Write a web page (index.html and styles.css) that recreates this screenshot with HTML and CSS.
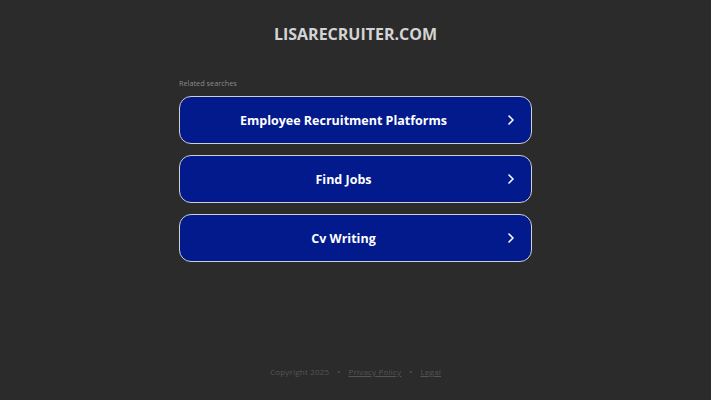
FILE: index.html
```html
<!DOCTYPE html>
<html>
<head>
<meta charset="utf-8">
<link rel="stylesheet" href="styles.css">
</head>
<body>
<div class="page">
  <header class="header">
    <h1 class="domain">LISARECRUITER.COM</h1>
  </header>
  <main class="main">
    <div class="related">
      <div class="related-title">Related searches</div>
      <a class="btn" href="#"><span class="btn-text">Employee Recruitment Platforms</span><svg class="chev" viewBox="0 0 6 10" width="6" height="10"><path d="M1 1 L5 5 L1 9" fill="none" stroke="#fff" stroke-width="1.6" stroke-linecap="round" stroke-linejoin="round"/></svg></a>
      <a class="btn" href="#"><span class="btn-text">Find Jobs</span><svg class="chev" viewBox="0 0 6 10" width="6" height="10"><path d="M1 1 L5 5 L1 9" fill="none" stroke="#fff" stroke-width="1.6" stroke-linecap="round" stroke-linejoin="round"/></svg></a>
      <a class="btn" href="#"><span class="btn-text">Cv Writing</span><svg class="chev" viewBox="0 0 6 10" width="6" height="10"><path d="M1 1 L5 5 L1 9" fill="none" stroke="#fff" stroke-width="1.6" stroke-linecap="round" stroke-linejoin="round"/></svg></a>
    </div>
  </main>
  <footer class="footer">
    <span>Copyright 2025</span>
    <span class="dot">•</span>
    <a href="#">Privacy Policy</a>
    <span class="dot">•</span>
    <a href="#">Legal</a>
  </footer>
</div>
</body>
</html>
```
FILE: styles.css
```css
html, body {
  margin: 0;
  padding: 0;
  background: #2b2b2b;
  font-family: "Open Sans", "DejaVu Sans", sans-serif;
}
.page {
  width: 711px;
  height: 400px;
  display: flex;
  flex-direction: column;
  align-items: center;
}
.header {
  padding-top: 24px;
  height: 50px;
  box-sizing: border-box;
}
.domain {
  margin: 0;
  font-size: 16px;
  line-height: 20px;
  font-weight: 700;
  color: #d4d4d4;
}
.main {
  padding-top: 27px;
  flex: 1;
}
.related {
  width: 353px;
  display: flex;
  flex-direction: column;
  gap: 11px;
}
.related-title {
  font-size: 7.3px;
  line-height: 12px;
  color: #8a8a8a;
  margin-bottom: -4px;
}
.btn {
  height: 48px;
  box-sizing: border-box;
  border: 1.5px solid #d0d0d0;
  border-radius: 12px;
  background: #021a8c;
  display: flex;
  align-items: center;
  padding: 0 17px 0 0;
  text-decoration: none;
}
.btn-text {
  flex: 1;
  text-align: center;
  color: #fff;
  font-size: 12.5px;
  font-weight: 700;
  padding-left: 11px;
}
.chev {
  flex: none;
  margin-left: 12px;
}
.footer {
  height: 34px;
  display: flex;
  gap: 7px;
  font-size: 8px;
  color: #555555;
  letter-spacing: 0.2px;
}
.footer a {
  color: #555555;
}
.dot {
  margin: 0 1px;
}
```
